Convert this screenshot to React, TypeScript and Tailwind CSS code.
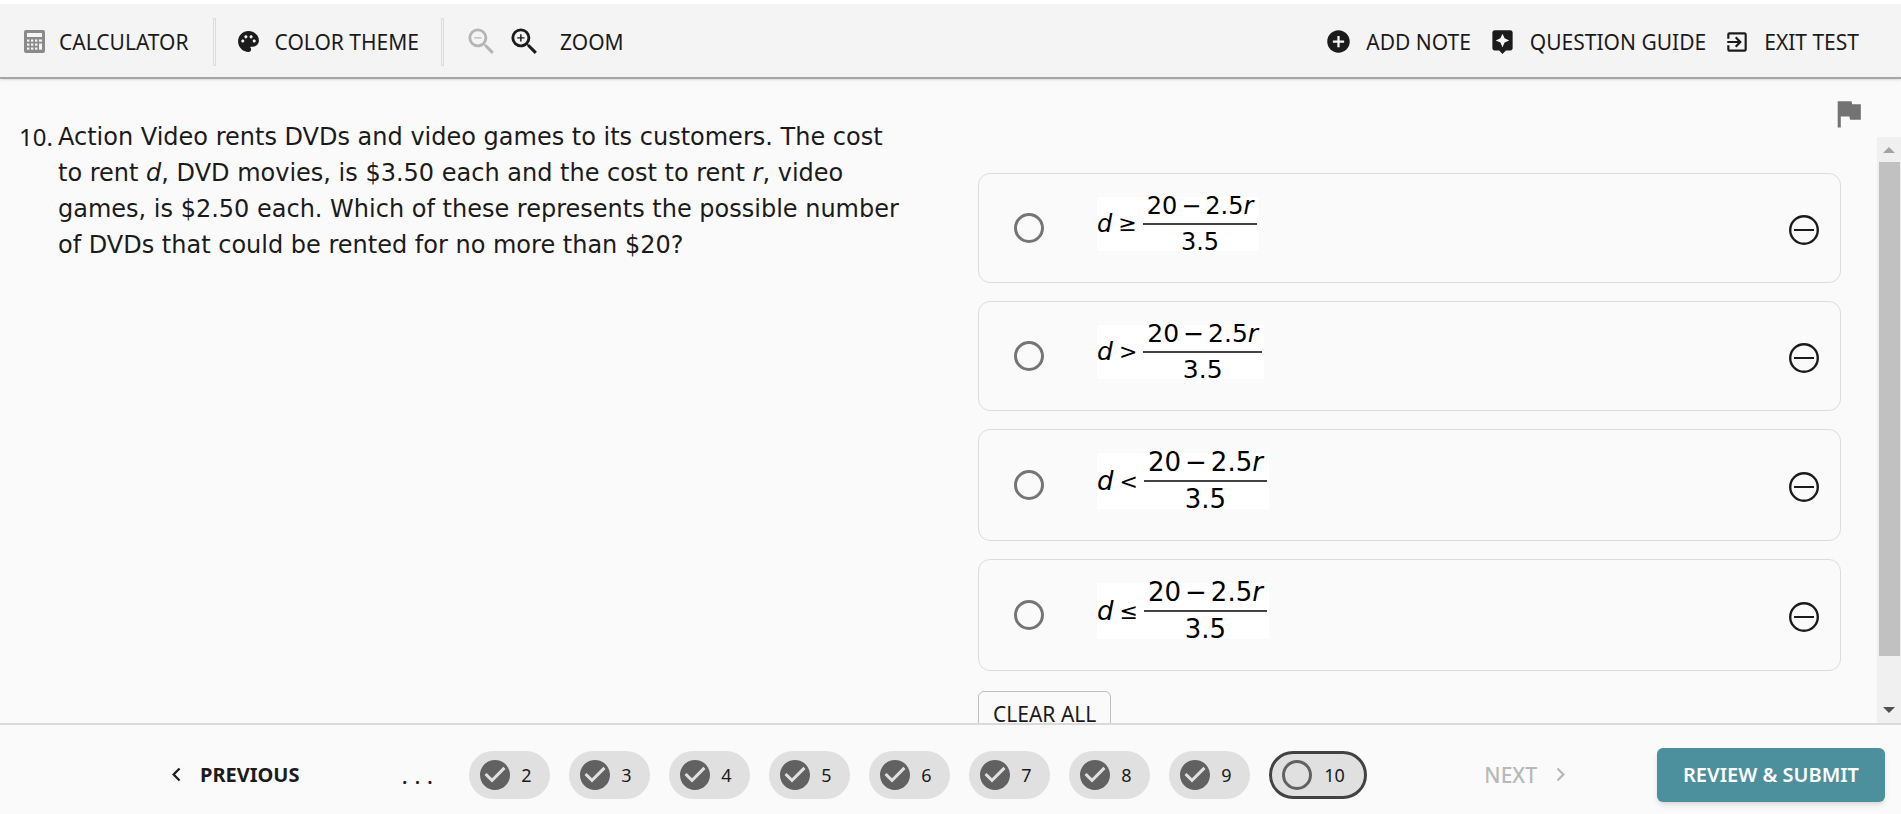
import React, { useState } from 'react';
import {
  MdAddCircle,
  MdAssistant,
  MdCheckCircle,
  MdChevronLeft,
  MdChevronRight,
  MdExitToApp,
  MdFlag,
  MdPalette,
  MdZoomIn,
  MdZoomOut,
} from 'react-icons/md';

interface Choice {
  id: string;
  sign: string;
  size: string;
}

const CHOICES: Choice[] = [
  { id: 'a', sign: '≥', size: 'text-[24px] leading-[18px]' },
  { id: 'b', sign: '>', size: 'text-[25px] leading-[18px]' },
  { id: 'c', sign: '<', size: 'text-[26px] leading-[19px]' },
  { id: 'd', sign: '≤', size: 'text-[26px] leading-[19px]' },
];

const ANSWERED = [2, 3, 4, 5, 6, 7, 8, 9];

const CalculatorIcon = () => (
  <svg viewBox="0 0 21 23" className="h-[23px] w-[21px] text-[#8a8a8a]" aria-hidden="true">
    <rect width="21" height="23" rx="2" fill="currentColor" />
    <g fill="#f4f4f4">
      <rect x="3" y="3" width="15" height="4" />
      {[9.5, 13.5, 17.5].map((y) =>
        [3, 7, 11].map((x) => <rect key={`${x}-${y}`} x={x} y={y} width="2.4" height="2.2" />)
      )}
      <rect x="15" y="9.5" width="3" height="2.2" />
      <rect x="15" y="13.5" width="3" height="6.2" />
    </g>
  </svg>
);

const Formula = ({ sign, size }: { sign: string; size: string }) => (
  <span className={`flex items-center gap-[6px] bg-white pr-[2px] font-['DejaVu_Sans',sans-serif] text-black ${size}`}>
    <i>d</i>
    <span className="text-[22px]">{sign}</span>
    <span className="flex flex-col items-center">
      <span className="px-1">
        20<span className="px-1">−</span>2.5<i>r</i>
      </span>
      <span className="mt-2 mb-2 h-[2px] w-full bg-[#444]" />
      <span>3.5</span>
    </span>
  </span>
);

const ToolButton = ({ icon, label, className }: { icon: React.ReactNode; label: string; className?: string }) => (
  <button type="button" className={`flex items-center gap-[14px] ${className ?? ''}`}>
    {icon}
    <span>{label}</span>
  </button>
);

const App = () => {
  const [selected, setSelected] = useState('');

  return (
    <div className="flex h-screen flex-col overflow-hidden bg-[#fafafa] font-['Noto_Sans',sans-serif] text-[21px] leading-6 text-[#1b1b1b]">
      {/* Toolbar */}
      <header className="z-10 flex h-[79px] shrink-0 items-center justify-between border-t-4 border-b-2 border-t-white border-b-[#a5a5a5] bg-[#f4f4f4] pt-[2px] pr-[42px] pl-6 shadow-sm">
        <div className="flex items-center">
          <ToolButton icon={<CalculatorIcon />} label="CALCULATOR" />
          <div className="ml-6 h-12 w-[3px] border border-[#dcdcdc]" />
          <ToolButton icon={<MdPalette size={25} />} label="COLOR THEME" className="ml-5" />
          <div className="ml-[22px] h-12 w-[3px] border border-[#dcdcdc]" />
          <button type="button" aria-label="Zoom out" className="ml-5 text-[#b5b5b5]">
            <MdZoomOut size={35} />
          </button>
          <button type="button" aria-label="Zoom in" className="ml-2">
            <MdZoomIn size={35} />
          </button>
          <span className="ml-[18px]">ZOOM</span>
        </div>
        <nav className="flex items-center gap-[18px]">
          <ToolButton icon={<MdAddCircle size={27} />} label="ADD NOTE" />
          <ToolButton icon={<MdAssistant size={27} />} label="QUESTION GUIDE" />
          <ToolButton icon={<MdExitToApp size={26} />} label="EXIT TEST" />
        </nav>
      </header>

      <main className="flex min-h-0 flex-1">
        {/* Question */}
        <section className="flex w-[978px] shrink-0 pt-10 pr-[72px] pl-[19px] font-['DejaVu_Sans',sans-serif] text-[24px] leading-9">
          <span className="w-[39px] shrink-0 font-['Noto_Sans',sans-serif]">10.</span>
          <p>
            Action Video rents DVDs and video games to its customers. The cost to rent <i>d</i>, DVD movies, is $3.50
            each and the cost to rent <i>r</i>, video games, is $2.50 each. Which of these represents the possible
            number of DVDs that could be rented for no more than $20?
          </p>
        </section>

        {/* Answers */}
        <section className="flex min-w-0 flex-1 flex-col">
          <div className="flex h-[58px] shrink-0 items-center justify-end pt-[10px] pr-[34px] text-[#737373]">
            <button type="button" aria-label="Flag question">
              <MdFlag size={37} />
            </button>
          </div>

          <div className="flex min-h-0 flex-1">
            <div className="min-w-0 flex-1 overflow-hidden pt-9 pr-9">
              <div className="flex flex-col gap-[18px]">
                {CHOICES.map((choice) => (
                  <div key={choice.id} className="flex items-center rounded-xl border border-[#dcdcdc] pr-[21px]">
                    <label className="flex flex-1 items-center pl-[35px]">
                      <input
                        type="radio"
                        name="answer"
                        checked={selected === choice.id}
                        onChange={() => setSelected(choice.id)}
                        className="h-[30px] w-[30px] appearance-none rounded-full border-3 border-[#757575] checked:bg-[#757575]"
                      />
                      <span className="pt-[23px] pb-[31px] pl-[53px]">
                        <Formula sign={choice.sign} size={choice.size} />
                      </span>
                    </label>
                    <button type="button" aria-label="Eliminate choice" className="pt-1">
                      <svg viewBox="0 0 30 30" className="h-[30px] w-[30px]" fill="none" stroke="currentColor">
                        <circle cx="15" cy="15" r="13.8" strokeWidth="2.4" />
                        <path d="M5 15h20" strokeWidth="2" />
                      </svg>
                    </button>
                  </div>
                ))}
              </div>
              <button
                type="button"
                onClick={() => setSelected('')}
                className="mt-5 h-[46px] rounded-md border border-[#bdbdbd] px-[14px]"
              >
                CLEAR ALL
              </button>
            </div>

            {/* Scrollbar */}
            <div className="flex w-6 shrink-0 flex-col items-center bg-[#f0f0f0] text-[#a3a3a3]">
              <svg viewBox="0 0 24 25" className="h-[25px] w-6 shrink-0" fill="currentColor">
                <path d="M6 16l6-6 6 6z" />
              </svg>
              <div className="w-[21px] flex-1 bg-[#c1c1c1]" />
              <svg viewBox="0 0 24 25" className="mt-[42px] h-[25px] w-6 shrink-0 text-[#505050]" fill="currentColor">
                <path d="M6 9h12l-6 6z" />
              </svg>
            </div>
          </div>
        </section>
      </main>

      {/* Question navigation */}
      <footer className="flex h-[91px] shrink-0 items-center border-t-2 border-[#dadada] pt-[10px] pr-4 pl-[163px]">
        <button type="button" className="flex items-center gap-[10px] text-[20px] font-bold">
          <MdChevronLeft size={27} />
          <span>PREVIOUS</span>
        </button>
        <span className="ml-[102px] text-[24px]">. . .</span>
        <ol className="ml-9 flex gap-[19px] text-[18px]">
          {ANSWERED.map((n) => (
            <li key={n}>
              <button type="button" className="flex h-12 w-[81px] items-center gap-2 rounded-full bg-[#e0e0e0] pl-2">
                <MdCheckCircle size={36} className="text-[#616161]" />
                <span>{n}</span>
              </button>
            </li>
          ))}
          <li>
            <button
              type="button"
              aria-current="step"
              className="flex h-12 w-[98px] items-center gap-3 rounded-full border-3 border-[#424242] bg-[#e0e0e0] pl-[10px]"
            >
              <span className="h-[30px] w-[30px] rounded-full border-3 border-[#616161]" />
              <span>10</span>
            </button>
          </li>
        </ol>
        <button type="button" disabled className="ml-auto flex items-center gap-[10px] font-medium text-[#b8b8b8]">
          <span>NEXT</span>
          <MdChevronRight size={27} />
        </button>
        <button
          type="button"
          className="ml-[83px] h-[54px] rounded-md bg-[#4c8f9d] px-[26px] text-[20px] font-semibold text-white shadow-md"
        >
          REVIEW &amp; SUBMIT
        </button>
      </footer>
    </div>
  );
};

export default App;
